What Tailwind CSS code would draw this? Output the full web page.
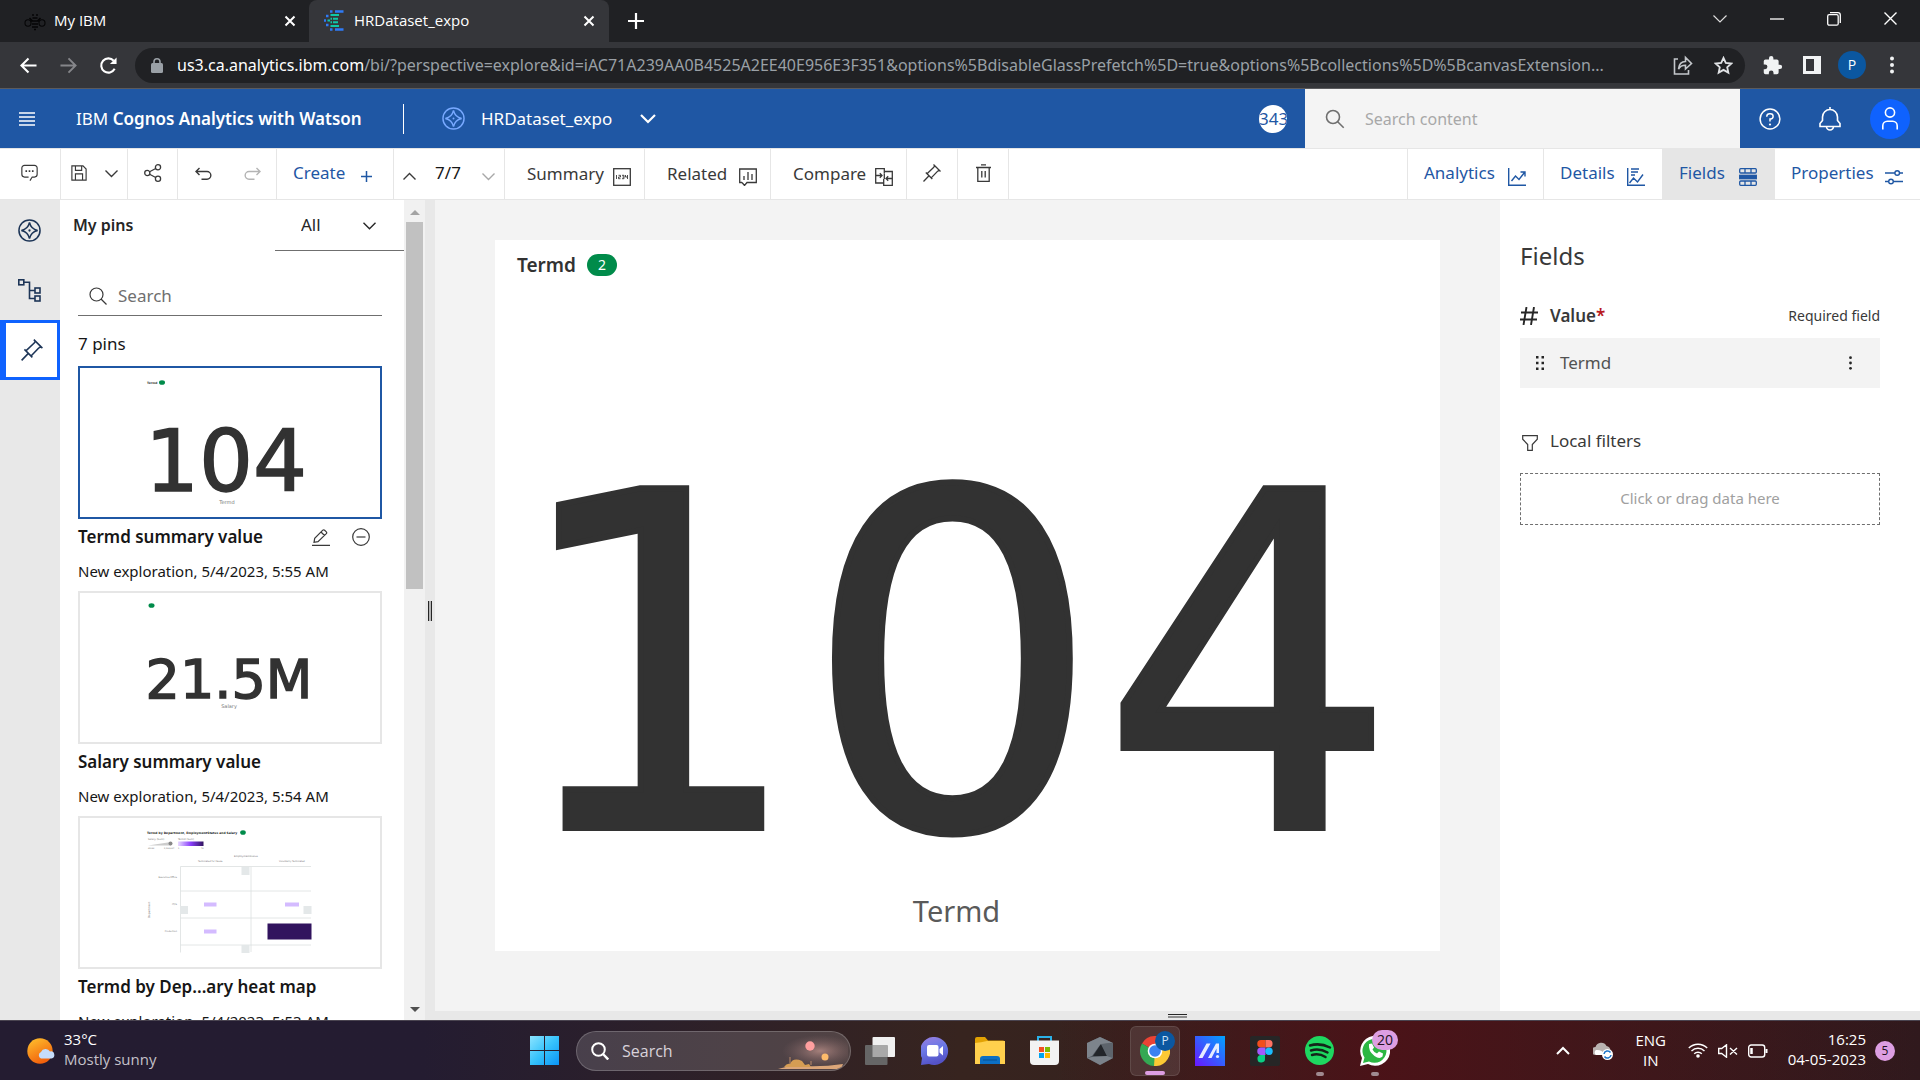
<!DOCTYPE html>
<html lang="en">
<head>
<meta charset="utf-8">
<title>HRDataset_expo</title>
<script src="https://cdn.jsdelivr.net/npm/@tailwindcss/browser@4"></script>
</head>
<body class="flex h-screen flex-col overflow-hidden bg-white font-['Noto_Sans',sans-serif] text-base text-[#161616]">

<!-- Browser window: tab strip -->
<div class="flex h-[42px] shrink-0 items-stretch bg-[#202124] font-['Open_Sans',sans-serif] text-[15px] text-white">
  <div class="flex w-[309px] items-center pr-[9px] pb-px pl-6">
    <svg class="size-[22px] shrink-0" viewBox="0 0 22 22" fill="none" stroke="#050506" stroke-width="1.1"><ellipse cx="4" cy="13" rx="3" ry="3.2"/><ellipse cx="18" cy="13" rx="3" ry="3.2"/><path d="M5.500 8l3 3M16.500 8l-3 3M8 5h2M12 5h2M8.500 8h5M7 11h8M8 14h6M8 17h6M10 19.500h2" stroke-width="1.600"/></svg>
    <span class="ml-2 flex-1">My IBM</span>
    <button class="grid size-5 place-items-center" aria-label="Close tab"><svg class="size-3" viewBox="0 0 12 12" stroke="#fff" stroke-width="2"><path d="M1.500 1.500l9 9M10.500 1.500l-9 9"/></svg></button>
  </div>
  <div class="flex w-[300px] items-center rounded-t-lg bg-[#35363a] pr-[10px] pb-px pl-[15px]">
    <svg class="size-[21px] shrink-0" viewBox="0 0 21 21"><path d="M6 1.500h2.500M11 1.500h8.500M6 19.500h2.500M11 19.500h8.500M0 10.500h2M2 6h2.500M2 15h2.500" stroke="#2f7bf6" stroke-width="2.400"/><path d="M6.500 5h8.500M6.500 8.800h1.500M9 8.800h5M3.500 10.500h2.500M6.500 12.300h1.500M9 12.300h5M6.500 16h8.500" stroke="#0fc7a9" stroke-width="2"/></svg>
    <span class="ml-[9px] flex-1">HRDataset_expo</span>
    <button class="grid size-5 place-items-center" aria-label="Close tab"><svg class="size-3" viewBox="0 0 12 12" stroke="#fff" stroke-width="2"><path d="M1.500 1.500l9 9M10.500 1.500l-9 9"/></svg></button>
  </div>
  <button class="ml-[15px] grid w-6 place-items-center" aria-label="New tab"><svg class="size-4" viewBox="0 0 16 16" stroke="#fff" stroke-width="2.200"><path d="M8 0v16M0 8h16"/></svg></button>
  <div class="mr-px ml-auto flex items-center pb-[5px]">
    <button class="grid w-[57px] place-items-center" aria-label="Search tabs"><svg class="h-2 w-[14px]" viewBox="0 0 14 8" fill="none" stroke="#ddd" stroke-width="1.200"><path d="M.5 .5L7 7l6.500-6.500"/></svg></button>
    <button class="grid w-[57px] place-items-center" aria-label="Minimize"><svg class="h-3 w-[14px]" viewBox="0 0 14 12" stroke="#fff" stroke-width="1.300"><path d="M0 6h14"/></svg></button>
    <button class="grid w-[57px] place-items-center" aria-label="Restore"><svg class="size-[14px]" viewBox="0 0 14 14" fill="none" stroke="#fff" stroke-width="1.300"><rect x=".7" y="2.700" width="10.500" height="10.500" rx="1.500"/><path d="M3 .7h8a2.300 2.300 0 0 1 2.300 2.300v8"/></svg></button>
    <button class="grid w-[57px] place-items-center" aria-label="Close"><svg class="size-[13px]" viewBox="0 0 13 13" stroke="#fff" stroke-width="1.400"><path d="M.5 .5l12 12M12.500 .5l-12 12"/></svg></button>
  </div>
</div>

<!-- Browser window: address bar -->
<div class="flex h-[47px] shrink-0 items-center border-b border-[#5b5b5e] bg-[#35363a] pr-2 pl-[8px] font-['Open_Sans',sans-serif] text-[#e8eaed]">
  <button class="grid w-10 place-items-center" aria-label="Back"><svg class="size-[17px]" viewBox="0 0 18 18" fill="none" stroke="#fff" stroke-width="2.200"><path d="M17.500 9H2M9 1.500L1.500 9 9 16.500"/></svg></button>
  <button class="grid w-10 place-items-center" aria-label="Forward"><svg class="size-[17px]" viewBox="0 0 18 18" fill="none" stroke="#85868a" stroke-width="2"><path d="M.5 9H16M9 1.500L16.500 9 9 16.500"/></svg></button>
  <button class="grid w-10 place-items-center" aria-label="Reload"><svg class="size-[19px]" viewBox="0 0 20 20" fill="none" stroke="#fff" stroke-width="2.200"><path d="M16.500 13.500A7.500 7.500 0 1 1 15.500 5"/><path d="M18.500 1.500v7h-7z" fill="#fff" stroke="none"/></svg></button>
  <div class="ml-[7px] flex h-[35px] min-w-0 flex-1 items-center rounded-full bg-[#202124] pr-[2px] pl-4">
    <svg class="h-[15px] w-3 shrink-0" viewBox="0 0 12 15"><rect y="5" width="12" height="10" rx="1.500" fill="#9aa0a6"/><path d="M3 6V3.800a3 3 0 0 1 6 0V6" fill="none" stroke="#9aa0a6" stroke-width="1.600"/></svg>
    <div role="textbox" aria-label="Address" class="ml-[14px] min-w-0 flex-1 overflow-hidden font-['Noto_Sans',sans-serif] text-base whitespace-nowrap text-[#9aa0a6]"><span class="text-white">us3.ca.analytics.ibm.com</span>/bi/?perspective=explore&amp;id=iAC71A239AA0B4525A2EE40E956E3F351&amp;options%5BdisableGlassPrefetch%5D=true&amp;options%5Bcollections%5D%5BcanvasExtension...</div>
    <button class="ml-1 grid w-10 place-items-center" aria-label="Share page"><svg class="size-5" viewBox="0 0 20 20" fill="none" stroke="#c4c7cb" stroke-width="1.600"><path d="M5 4H1.500v15h14v-4"/><path d="M5.500 14c.5-5 3-7.500 7-7.500V2.500l6 6-6 5.500v-3.800c-3 0-5.500 1-7 3.800z"/></svg></button>
    <button class="grid w-10 place-items-center" aria-label="Bookmark"><svg class="size-[19px]" viewBox="0 0 20 20" fill="none" stroke="#e0e2e5" stroke-width="1.900"><path d="M10 2l2.400 5.300 5.800.6-4.300 3.900 1.200 5.700-5.100-2.900-5.100 2.900 1.200-5.700L1.800 7.900l5.800-.6z"/></svg></button>
  </div>
  <button class="ml-[7px] grid w-10 place-items-center" aria-label="Extensions"><svg class="size-[21px]" viewBox="0 0 24 24" fill="#f1f3f4"><path d="M20.500 11H19V7a2 2 0 0 0-2-2h-4V3.500a2.500 2.500 0 0 0-5 0V5H4a2 2 0 0 0-2 2v3.800h1.500a2.700 2.700 0 0 1 0 5.400H2V20a2 2 0 0 0 2 2h3.800v-1.500a2.700 2.700 0 0 1 5.400 0V22H17a2 2 0 0 0 2-2v-4h1.500a2.500 2.500 0 0 0 0-5z"/></svg></button>
  <button class="grid w-10 place-items-center" aria-label="Side panel"><svg class="size-[18px]" viewBox="0 0 18 18"><path fill="#f1f3f4" fill-rule="evenodd" d="M0 0h18v18H0zM3 3v12h8V3z"/></svg></button>
  <button class="mx-[6px] grid size-7 place-items-center rounded-full bg-[#0b57a0] text-sm text-white" aria-label="Profile">P</button>
  <button class="grid w-10 place-items-center" aria-label="Menu"><svg class="h-[18px] w-1" viewBox="0 0 4 18" fill="#f1f3f4"><circle cx="2" cy="2.500" r="2"/><circle cx="2" cy="9" r="2"/><circle cx="2" cy="15.500" r="2"/></svg></button>
</div>

<!-- Application header -->
<header class="flex h-[59px] shrink-0 items-center bg-[#1f57a4] text-white">
  <button class="grid w-[54px] place-items-center" aria-label="Open menu"><svg class="h-[14px] w-4" viewBox="0 0 16 14" stroke="#fff" stroke-width="1.400"><path d="M0 1h16M0 5h16M0 9h16M0 13h16"/></svg></button>
  <div class="ml-[22px] w-[327px] text-[17px] whitespace-nowrap">IBM <b class="font-semibold">Cognos Analytics with Watson</b></div>
  <div class="h-[30px] w-px bg-white"></div>
  <svg class="ml-[38px] size-[23px]" viewBox="0 0 24 24" fill="none" stroke="#78a9ff" stroke-width="1.500"><circle cx="12" cy="12" r="11"/><path d="M12 3.500Q13.500 10.500 20.500 12 13.500 13.500 12 20.500 10.500 13.500 3.500 12 10.500 10.500 12 3.500z"/><circle cx="12" cy="12" r="1" fill="#78a9ff" stroke="none"/></svg>
  <button class="ml-4 flex items-center gap-[28px] text-[17px]">HRDataset_expo <svg class="h-[10px] w-4" viewBox="0 0 16 10" fill="none" stroke="#fff" stroke-width="2.200"><path d="M1 1l7 7 7-7"/></svg></button>
  <div class="mr-[18px] ml-auto flex size-7 items-center justify-start overflow-hidden rounded-full bg-white text-[17px] text-[#1f57a4]"><span>343</span></div>
  <label class="flex h-full w-[435px] items-center bg-[#f4f4f4] pl-5">
    <svg class="size-5" viewBox="0 0 20 20" fill="none" stroke="#6f6f6f" stroke-width="1.600"><circle cx="8" cy="8" r="6.500"/><path d="M12.700 12.700l6 6"/></svg>
    <input type="text" aria-label="Search content" placeholder="Search content" class="ml-5 w-[340px] bg-transparent text-base text-[#393939] outline-none placeholder:text-[#a8a8a8]">
  </label>
  <button class="grid w-[60px] place-items-center" aria-label="Help"><svg class="size-[22px]" viewBox="0 0 24 24" fill="none" stroke="#fff" stroke-width="1.600"><circle cx="12" cy="12" r="10.800"/><path d="M8.500 9.500V9A3 3 0 0 1 11.500 6.200h1a2.900 2.900 0 0 1 0 5.800H12v2.800"/><circle cx="12" cy="18" r="1.200" fill="#fff" stroke="none"/></svg></button>
  <button class="grid w-[60px] place-items-center" aria-label="Notifications"><svg class="h-6 w-[22px]" viewBox="0 0 22 24" fill="none" stroke="#fff" stroke-width="1.600"><path d="M11 0v3M1 19.500v-3l2.500-3V10a7.500 7.500 0 0 1 15 0v3.500l2.500 3v3zM7.500 19.500a3.500 3.500 0 0 0 7 0"/></svg></button>
  <button class="mx-[10px] grid size-10 place-items-center rounded-full bg-[#0f62fe]" aria-label="Account"><svg class="h-[23px] w-4" viewBox="0 0 16 23" fill="none" stroke="#fff" stroke-width="1.600"><circle cx="8" cy="5.500" r="4.600"/><path d="M.8 22.500v-3.700a4.500 4.500 0 0 1 4.500-4.500h5.400a4.500 4.500 0 0 1 4.500 4.500v3.700"/></svg></button>
</header>

<!-- Exploration toolbar -->
<div class="flex h-[52px] shrink-0 items-stretch border-y border-[#e6e6e6] text-[17px] text-[#393939]">
  <button class="grid w-[61px] place-items-center border-r border-[#e6e6e6] pr-px pb-[2px]" aria-label="Comments"><svg class="h-[18px] w-[19px]" viewBox="0 0 19 20" fill="none" stroke="#393939" stroke-width="1.300"><path d="M10 18.500l2.500-4H15a3 3 0 0 0 3-3V4.500a3 3 0 0 0-3-3H4a3 3 0 0 0-3 3v7a3 3 0 0 0 3 3h4.500"/><path d="M5 8h1.800M8.600 8h1.800M12.200 8H14" stroke-width="2"/></svg></button>
  <div class="flex w-[67px] items-center border-r border-[#e6e6e6] pb-[2px] pl-[10px]">
    <button aria-label="Save"><svg class="size-4" viewBox="0 0 18 18" fill="none" stroke="#393939" stroke-width="1.300"><path d="M1 1h12.500L17 4.500V17H1zM5 1v5h7V1M5 17v-7h8v7"/></svg></button>
    <button class="ml-[18px]" aria-label="Save options"><svg class="h-[9px] w-[13px]" viewBox="0 0 13 9" fill="none" stroke="#393939" stroke-width="1.400"><path d="M.5 1.500l6 6 6-6"/></svg></button>
  </div>
  <button class="grid w-[50px] place-items-center border-r border-[#e6e6e6] pb-[2px]" aria-label="Share"><svg class="size-[18px]" viewBox="0 0 18 18" fill="none" stroke="#393939" stroke-width="1.300"><circle cx="3.300" cy="9" r="2.600"/><circle cx="14" cy="3.300" r="2.600"/><circle cx="14" cy="14.700" r="2.600"/><path d="M5.600 7.800l6.100-3.300M5.600 10.200l6.100 3.300"/></svg></button>
  <div class="flex w-[99px] items-center gap-8 border-r border-[#e6e6e6] pl-[17px]">
    <button aria-label="Undo"><svg class="h-[14px] w-[17px]" viewBox="0 0 17 14" fill="none" stroke="#393939" stroke-width="1.400"><path d="M4.500 1L1 4.500 4.500 8M1 4.500h11a3.800 3.800 0 0 1 0 7.700H6.500"/></svg></button>
    <button aria-label="Redo"><svg class="h-[14px] w-[17px]" viewBox="0 0 17 14" fill="none" stroke="#b4b4b4" stroke-width="1.400"><path d="M12.500 1L16 4.500 12.500 8M16 4.500H5a3.800 3.800 0 0 0 0 7.700h5.500"/></svg></button>
  </div>
  <button class="flex w-[117px] items-center gap-4 border-r border-[#e6e6e6] pl-4 text-[#1f57a4]"><span class="pb-[2px]">Create</span><svg class="mt-[5px] size-[11px]" viewBox="0 0 11 11" stroke="#1f57a4" stroke-width="1.500"><path d="M5.500 0v11M0 5.500h11"/></svg></button>
  <div class="flex w-[111px] items-center border-r border-[#e6e6e6] pl-[9px] text-[#161616]">
    <button class="mt-1" aria-label="Previous"><svg class="h-[9px] w-[13px]" viewBox="0 0 13 9" fill="none" stroke="#393939" stroke-width="1.400"><path d="M.5 7.500l6-6 6 6"/></svg></button>
    <span class="w-[66px] pr-[2px] pb-[2px] text-center">7/7</span>
    <button class="mt-1" aria-label="Next"><svg class="h-[9px] w-[13px]" viewBox="0 0 13 9" fill="none" stroke="#a8a8a8" stroke-width="1.400"><path d="M.5 1.500l6 6 6-6"/></svg></button>
  </div>
  <button class="flex w-[140px] items-center justify-between border-r border-[#e6e6e6] pr-[13px] pl-[22px]"><span class="pb-px">Summary</span><svg class="mt-[5px] h-[18px] w-[18px]" viewBox="0 0 18 18" fill="none" stroke="#393939" stroke-width="1.300"><rect x=".7" y=".7" width="16.600" height="16.600"/><path d="M3.500 7v4M5.500 7.300h2v1.700h-2v1.700h2M9 7.300h2v3.400H9M9.500 9h1.500M12.500 7v2h2M14.500 7v4" stroke-width=".9"/></svg></button>
  <button class="flex w-[126px] items-center justify-between border-r border-[#e6e6e6] pr-[13px] pl-[22px]"><span class="pb-px">Related</span><svg class="mt-[5px] h-[18px] w-[18px]" viewBox="0 0 18 18" fill="none" stroke="#393939" stroke-width="1.300"><path d="M3 14.500H.7V1h16.600v13.500H8l-2.500 3-2.500-3M5 8v4M9 4v8M13 6v6"/></svg></button>
  <button class="flex w-[136px] items-center justify-between border-r border-[#e6e6e6] pr-[13px] pl-[22px]"><span class="pb-px">Compare</span><svg class="mt-[5px] h-[18px] w-[18px]" viewBox="0 0 18 18" fill="none" stroke="#393939" stroke-width="1.300"><path d="M8.500 15H.7V.7h8.600v4.500M9.300 11V5.500M9 3.500h8.300v13.800H8.700V11"/><path d="M1 7.500h6M4.800 5.300L7 7.500 4.800 9.700M17 10.500h-6M13.200 8.300L11 10.500l2.200 2.200"/></svg></button>
  <button class="grid w-[51px] place-items-center border-r border-[#e6e6e6] pb-[2px]" aria-label="Pin"><svg class="size-[18px]" viewBox="0 0 18 18" fill="none" stroke="#393939" stroke-width="1.300"><path d="M.5 17.500l5.500-5.700M2.800 8.500l6.500 6.500M4 9.700L10.800 3.300M8.200 13.900L14.700 7.100M10.500.5l7 7M10.800 3.300L11.700 1.700M14.700 7.100L16.400 6.300"/></svg></button>
  <button class="grid w-[51px] place-items-center border-r border-[#e6e6e6] pb-[2px]" aria-label="Delete"><svg class="h-[18px] w-[15px]" viewBox="0 0 15 18" fill="none" stroke="#393939" stroke-width="1.300"><path d="M5 .8h5M0 3.500h15M1.800 3.500v13.800h11.400V3.500M5.800 7v6.500M9.200 7v6.500"/></svg></button>
  <div class="ml-auto flex text-[#1f57a4]">
    <button class="flex w-[136px] items-center justify-between border-l border-[#e6e6e6] pr-[17px] pl-4"><span class="pb-[2px]">Analytics</span><svg class="mt-[5px] size-[18px]" viewBox="0 0 18 18" fill="none" stroke="#1f57a4" stroke-width="1.400"><path d="M.7 0v17.300H18M3.500 13l4-5 3.500 3.500 5.500-7M12.500 4h4.500v4.500"/></svg></button>
    <button class="flex w-[119px] items-center justify-between border-l border-[#e6e6e6] pr-[17px] pl-4"><span class="pb-[2px]">Details</span><svg class="mt-[5px] size-[18px]" viewBox="0 0 18 18" fill="none" stroke="#1f57a4" stroke-width="1.400"><path d="M.7 0v17.300H18M4 1h8M4 4h7M4 7h4M2.500 15l4-5 4 4 5.500-7.500"/></svg></button>
    <button class="flex w-[113px] items-center justify-between bg-[#e6e6e6] pr-[18px] pl-[17px]"><span class="pb-[2px]">Fields</span><svg class="mt-[5px] size-[18px]" viewBox="0 0 18 18" fill="none" stroke="#1f57a4" stroke-width="1.300"><rect x=".7" y=".7" width="16.600" height="4.300" rx="1"/><rect x=".7" y="7.300" width="16.600" height="3.400" fill="#1f57a4"/><rect x=".7" y="13" width="16.600" height="4.300" rx="1"/><path d="M6 1v4M12 1v4M6 13v4M12 13v4"/></svg></button>
    <button class="flex w-[145px] items-center justify-between pr-[17px] pl-4"><span class="pb-[2px]">Properties</span><svg class="mt-[5px] size-[18px]" viewBox="0 0 18 18" fill="none" stroke="#1f57a4" stroke-width="1.400"><path d="M0 5h10M14.500 5H18M0 13.500h3.500M8.500 13.500H18"/><circle cx="12.200" cy="5" r="2.300"/><circle cx="6" cy="13.500" r="2.300"/></svg></button>
  </div>
</div>

<main class="flex min-h-0 flex-1">
  <!-- Navigation rail -->
  <nav class="flex w-[60px] shrink-0 flex-col bg-[#e8e8e8]">
    <button class="grid h-[60px] place-items-center pr-[2px]" aria-label="Explore"><svg class="size-[23px]" viewBox="0 0 24 24" fill="none" stroke="#1d3557" stroke-width="1.600"><circle cx="12" cy="12" r="11"/><path d="M12 3.500Q13.500 10.500 20.500 12 13.500 13.500 12 20.500 10.500 13.500 3.500 12 10.500 10.500 12 3.500z"/><circle cx="12" cy="12" r="1.200" fill="#1d3557" stroke="none"/></svg></button>
    <button class="grid h-[60px] place-items-center pr-[2px]" aria-label="Relationships"><svg class="size-[23px]" viewBox="0 0 23 23" fill="none" stroke="#1d3557" stroke-width="1.600"><rect x=".8" y=".8" width="5" height="5"/><rect x="17" y="9" width="5" height="5"/><rect x="17" y="17" width="5" height="5"/><path d="M6 3.300h5.500v16.200H17M11.500 11.500H17"/></svg></button>
    <button class="grid h-[60px] place-items-center border-3 border-l-6 border-[#0f62fe] bg-white" aria-label="Pins"><svg class="size-[22px]" viewBox="0 0 18 18" fill="none" stroke="#1d3557" stroke-width="1.300"><path d="M.5 17.500l5.500-5.700M2.800 8.500l6.500 6.500M4 9.700L10.800 3.300M8.200 13.900L14.700 7.100M10.500.5l7 7M10.800 3.300L11.700 1.700M14.700 7.100L16.400 6.300"/></svg></button>
  </nav>

  <!-- Pins pane -->
  <section class="flex w-[344px] shrink-0 flex-col overflow-hidden" aria-label="My pins">
    <div class="flex h-[51px] shrink-0 justify-between pl-[13px]">
      <h2 class="pt-[13px] text-base font-semibold text-[#262626]">My pins</h2>
      <div class="relative w-[129px] border-b border-[#6f6f6f]">
        <select aria-label="Pin filter" class="h-full w-full appearance-none bg-transparent pl-[26px] text-[17px] text-[#262626]"><option>All</option></select>
        <svg class="absolute top-[22px] right-7 h-[8px] w-[13px]" viewBox="0 0 13 8" fill="none" stroke="#262626" stroke-width="1.400"><path d="M.5 .8l6 6 6-6"/></svg>
      </div>
    </div>
    <div class="pr-[22px] pl-[18px]">
      <label class="mt-[27px] flex h-[38px] items-center border-b border-[#6f6f6f] pb-[2px] pl-[11px]">
        <svg class="size-[18px]" viewBox="0 0 18 18" fill="none" stroke="#393939" stroke-width="1.200"><circle cx="7.500" cy="7.500" r="6.500"/><path d="M12 12l5.500 5.500"/></svg>
        <input type="text" aria-label="Search pins" placeholder="Search" class="ml-[11px] w-[240px] bg-transparent text-[17px] outline-none placeholder:text-[#6f6f6f]">
      </label>
      <p class="mt-[16px] mb-[10px] h-6 text-[17px] leading-6">7 pins</p>
      <article class="h-[225px]">
        <button class="block h-[153px] w-full border-2 border-[#1f57a4]" aria-label="Termd summary value"><svg class="h-full w-full font-['DejaVu_Sans',sans-serif]" viewBox="0 0 300 149" fill="#323232"><text x="67" y="16" font-size="3" font-weight="bold">Termd</text><ellipse cx="82" cy="14.500" rx="3" ry="2.300" fill="#008b4a"/><text x="146" y="123" font-size="85" text-anchor="middle" stroke="#323232" stroke-width="1.500">104</text><text x="147" y="136" font-size="5" text-anchor="middle" fill="#777">Termd</text></svg></button>
        <div class="mt-[6px] flex h-6 items-center">
          <h3 class="flex-1 text-[17px] leading-6 font-semibold">Termd summary value</h3>
          <button aria-label="Edit"><svg class="h-[17px] w-[18px]" viewBox="0 0 18 17" fill="none" stroke="#393939" stroke-width="1.200"><path d="M0 16.300h18M2 13.300l.7-4L10.800 1.200a1.300 1.300 0 0 1 1.800 0l1.700 1.700a1.300 1.300 0 0 1 0 1.800L6 12.700zM9 3l3.500 3.500"/></svg></button>
          <button class="mr-3 ml-[22px]" aria-label="Remove"><svg class="size-[18px]" viewBox="0 0 18 18" fill="none" stroke="#393939" stroke-width="1.200"><circle cx="9" cy="9" r="8.300"/><path d="M4.500 9h9"/></svg></button>
        </div>
        <p class="mt-3 text-[15px] leading-5">New exploration, 5/4/2023, 5:55 AM</p>
      </article>
      <article class="h-[225px]">
        <button class="block h-[153px] w-full border-2 border-[#e6e6e6]" aria-label="Salary summary value"><svg class="h-full w-full font-['DejaVu_Sans',sans-serif]" viewBox="0 0 300 149" fill="#323232"><ellipse cx="71.500" cy="12.500" rx="3" ry="2.300" fill="#008b4a"/><text x="149" y="105" font-size="54" text-anchor="middle" stroke="#323232" stroke-width="1.500">21.5M</text><text x="149" y="115" font-size="5" text-anchor="middle" fill="#777">Salary</text></svg></button>
        <h3 class="mt-[6px] text-[17px] leading-6 font-semibold">Salary summary value</h3>
        <p class="mt-3 text-[15px] leading-5">New exploration, 5/4/2023, 5:54 AM</p>
      </article>
      <article class="h-[225px]">
        <button class="block h-[153px] w-full border-2 border-[#e6e6e6]" aria-label="Termd by Department heat map"><svg class="h-full w-full font-['DejaVu_Sans',sans-serif]" viewBox="0 0 300 149" fill="#777">
          <defs><linearGradient id="scale"><stop stop-color="#e8daff"/><stop offset=".5" stop-color="#8a3ffc"/><stop offset="1" stop-color="#31135e"/></linearGradient></defs>
          <text x="67" y="16" font-size="3" font-weight="bold" fill="#222">Termd by Department, EmploymentStatus and Salary</text><ellipse cx="163" cy="14.500" rx="2.800" ry="2.300" fill="#008b4a"/>
          <text x="68" y="22" font-size="2.500">Salary (Sum)</text><text x="98" y="22" font-size="2.500">Termd (Sum)</text>
          <path d="M68 27.500l23-3.500v3.500z" fill="#ccc"/><circle cx="90.500" cy="25.500" r="2" fill="#888"/>
          <rect x="98" y="23.500" width="25.500" height="4.500" fill="url(#scale)"/>
          <text x="68" y="31" font-size="2">45046</text><text x="84" y="31" font-size="2">5,564,967</text><text x="98" y="31" font-size="2">1</text><text x="121" y="31" font-size="2">79</text>
          <text x="154" y="38.500" font-size="2.500">EmploymentStatus</text><text x="118" y="44" font-size="2.300">Terminated for Cause</text><text x="199" y="44" font-size="2.300">Voluntarily Terminated</text>
          <path d="M100.500 134.500V48.500H231M100.500 73H231M100.500 100H231M100.500 127H231M171 49v85" fill="none" stroke="#dcdfe0" stroke-width=".8"/>
          <text x="97" y="60" font-size="2.300" text-anchor="end">Executive Office</text><text x="97" y="87" font-size="2.300" text-anchor="end">IT/IS</text><text x="97" y="114" font-size="2.300" text-anchor="end">Production</text><text transform="translate(70 100) rotate(-90)" font-size="2.700">Department</text>
          <path d="M161.500 49h8v8h-8zM161.500 127h8v8h-8zM100 88h8v8h-8zM223.500 88h8v8h-8z" fill="#e4e8e9"/>
          <path d="M124 84.500h12.500v4H124zM205 84.500h14v4h-14zM124 111.500h12.500v4H124z" fill="#d4bbff"/>
          <rect x="187.500" y="105.500" width="44" height="16" fill="#31135e"/></svg></button>
        <h3 class="mt-[6px] text-[17px] leading-6 font-semibold">Termd by Dep...ary heat map</h3>
        <p class="mt-3 text-[15px] leading-5">New exploration, 5/4/2023, 5:53 AM</p>
      </article>
    </div>
  </section>

  <!-- Pane scrollbar and splitter -->
  <div class="flex w-[21px] shrink-0 flex-col items-center bg-[#f1f1f1] py-2">
    <svg class="mt-[2px] h-[5px] w-[10px]" viewBox="0 0 10 5"><path d="M0 5l5-5 5 5z" fill="#a3a3a3"/></svg>
    <div class="mt-[7px] h-[367px] w-[17px] bg-[#c1c1c1]"></div>
    <svg class="mt-auto h-[5px] w-[10px]" viewBox="0 0 10 5"><path d="M0 0l5 5 5-5z" fill="#505050"/></svg>
  </div>
  <div class="flex w-[10px] shrink-0 justify-center bg-[#e8e8e8] pt-[401px]"><div class="h-5 w-[4px] border-x border-[#262626] bg-[#b5b5b5]"></div></div>

  <div class="flex min-w-0 flex-1 flex-col">
    <div class="flex min-h-0 flex-1">
      <!-- Canvas -->
      <section class="flex min-w-0 flex-1 bg-[#f3f3f3] px-[60px] pt-10 pb-[60px]">
        <div class="flex min-w-0 flex-1 flex-col overflow-hidden bg-white">
          <div class="flex items-center gap-[11px] pt-[11px] pl-[22px]"><h1 class="text-[19px] leading-7 font-semibold text-[#323232]">Termd</h1><span class="flex h-[22px] w-[30px] items-center justify-center rounded-full bg-[#008b4a] text-sm text-white">2</span></div>
          <div class="mt-auto flex flex-col items-center pr-[22px] pb-4">
            <div class="mb-6 pr-2 font-['DejaVu_Sans',sans-serif] text-[466px] leading-[400px] text-[#323232] [-webkit-text-stroke:6px_#323232]">104</div>
            <div class="pb-1 text-[29px] leading-10 text-[#5a5a5a]">Termd</div>
          </div>
        </div>
      </section>
      <!-- Fields panel -->
      <aside class="w-[420px] shrink-0 bg-white pt-10 pr-10 pl-5 text-[#393939]">
        <h2 class="text-2xl leading-8">Fields</h2>
        <div class="mt-7 flex h-[31px] items-center">
          <svg class="size-[18px]" viewBox="0 0 18 18" fill="none" stroke="#262626" stroke-width="1.900"><path d="M6.500 0L3.500 18M14 0l-3 18M1 5.500h17M0 12.500h17"/></svg>
          <span class="ml-3 flex-1 text-[17px] font-semibold">Value<span class="text-[#b81921]">*</span></span>
          <span class="text-sm">Required field</span>
        </div>
        <div class="mt-[7px] flex h-[50px] items-center bg-[#f3f3f3] pr-[26px] pl-4">
          <svg class="h-[14px] w-2" viewBox="0 0 8 14" fill="#262626"><path d="M0 0h2.500v2.500H0zM5.500 0H8v2.500H5.500zM0 5.700h2.500v2.500H0zM5.500 5.700H8v2.500H5.500zM0 11.500h2.500V14H0zM5.500 11.500H8V14H5.500z"/></svg>
          <span class="ml-4 flex-1 text-[17px] text-[#525252]">Termd</span>
          <button class="grid w-2 place-items-center" aria-label="Field options"><svg class="h-[14px] w-[3px]" viewBox="0 0 3 14" fill="#262626"><circle cx="1.500" cy="1.700" r="1.400"/><circle cx="1.500" cy="7" r="1.400"/><circle cx="1.500" cy="12.300" r="1.400"/></svg></button>
        </div>
        <div class="mt-[41px] flex items-center text-[17px] leading-6">
          <svg class="mx-[2px] mt-1 size-4" viewBox="0 0 16 16" fill="none" stroke="#393939" stroke-width="1.200"><path d="M.7 .7h14.600v3.500l-5 5.300v5.800H5.700V9.500L.7 4.200z"/></svg>
          <span class="ml-[10px]">Local filters</span>
        </div>
        <button class="mt-5 block h-[52px] w-full border border-dashed border-[#6f6f6f] pb-[2px] text-[15px] text-[#a0a0a0]">Click or drag data here</button>
      </aside>
    </div>
    <div class="flex h-[9px] shrink-0 items-center bg-[#e8e8e8] pl-[733px]"><div class="h-[4px] w-[19px] border-t border-[#262626] border-b-2 border-b-[#8d8d8d]"></div></div>
  </div>
</main>

<!-- Desktop taskbar -->
<footer class="flex h-[60px] shrink-0 items-center border-t border-[#4a4450] bg-linear-to-r from-[#241c31] from-22% via-[#37241f] via-50% to-[#30191d] font-['Open_Sans',sans-serif] text-[15px] text-white">
  <div class="flex h-full w-full items-center bg-linear-to-r from-transparent from-55% via-[#4d1117]/90 via-72% to-transparent">
  <div class="flex w-[520px] items-center pl-[27px]">
    <svg class="h-[26px] w-7" viewBox="0 0 28 26"><defs><linearGradient id="sun" x1="0" y1="0" x2=".5" y2="1"><stop stop-color="#ffc42e"/><stop offset="1" stop-color="#f2610c"/></linearGradient></defs><circle cx="13" cy="13" r="12.700" fill="url(#sun)"/><path d="M14 20.500a3.500 3.500 0 0 1 0-6.500 5 5 0 0 1 9-.5 3.500 3.500 0 0 1 1.500 7z" fill="#c5dcfb"/></svg>
    <div class="ml-[9px] pb-[3px] text-[15px] leading-5">33°C<br><span class="text-[#c5c1c9]">Mostly sunny</span></div>
  </div>
  <button class="ml-[10px] shrink-0" aria-label="Start"><svg class="size-[29px]" viewBox="0 0 29 29"><defs><linearGradient id="win" x1="0" y1="0" x2="1" y2="1"><stop stop-color="#8ce4ff"/><stop offset=".5" stop-color="#37c3fb"/><stop offset="1" stop-color="#0a94f7"/></linearGradient></defs><path d="M0 0h14v14H0zM15 0h14v14H15zM0 15h14v14H0zM15 15h14v14H15z" fill="url(#win)"/></svg></button>
  <label class="ml-[17px] flex h-10 w-[275px] shrink-0 items-center overflow-hidden rounded-full border border-white/20 bg-white/15 pl-[14px]">
    <svg class="size-[18px] shrink-0" viewBox="0 0 18 18" fill="none" stroke="#fff" stroke-width="2"><circle cx="7.500" cy="7.500" r="6.300"/><path d="M12 12l5.200 5.500" stroke-width="2.400"/></svg>
    <input type="text" aria-label="Search desktop" placeholder="Search" class="ml-[13px] w-[156px] bg-transparent text-base outline-none placeholder:text-[#d8d2da]">
    <svg class="h-9 w-[70px] shrink-0" viewBox="0 0 70 36"><defs><radialGradient id="sky"><stop stop-color="#c99a92" stop-opacity=".7"/><stop offset="1" stop-color="#8a6a6c" stop-opacity="0"/></radialGradient></defs><ellipse cx="42" cy="18" rx="38" ry="16" fill="url(#sky)"/><circle cx="32" cy="13" r="4.700" fill="#ff9f9f"/><circle cx="47" cy="24" r="3.500" fill="#fdbb6b"/><path d="M0 36q12-4 25-3 20 1 40-2l-2 5z" fill="#dba679"/><path d="M6 34q3-4 6-3 3-7 12-3l3 4 4-1 2 3z" fill="#d59d53"/><path d="M12 31v-7M33 32v-4" stroke="#b98a6a"/></svg>
  </label>
  <div class="ml-px flex h-full shrink-0 items-center">
    <button class="grid w-[55px] place-items-center" aria-label="Task view"><svg class="h-7 w-[30px]" viewBox="0 0 30 28"><rect x="7.500" width="22.500" height="20" rx="1" fill="#f0f0f0"/><rect y="8" width="22.500" height="20" rx="1" fill="#666"/><rect x="7.500" y="8" width="15" height="12" fill="#a9a9a9"/></svg></button>
    <button class="grid w-[55px] place-items-center" aria-label="Chat"><svg class="size-7" viewBox="0 0 28 28"><defs><linearGradient id="chat" x1="0" y1="0" x2=".3" y2="1"><stop stop-color="#9b7fe0"/><stop offset=".5" stop-color="#6a78e6"/><stop offset="1" stop-color="#5452c6"/></linearGradient></defs><path d="M14 0a14 14 0 1 1-6 27L0 28l1-7A14 14 0 0 1 14 0z" fill="url(#chat)"/><rect x="6" y="8" width="11.500" height="11.500" rx="2" fill="#fff"/><path d="M18.500 12l3.500-3v9.500l-3.500-3z" fill="#fff"/></svg></button>
    <button class="grid w-[55px] place-items-center" aria-label="Files"><svg class="h-[27px] w-[30px]" viewBox="0 0 30 27"><path d="M0 2a2 2 0 0 1 2-2h8l3 3.500h15a2 2 0 0 1 2 2V9H0z" fill="#e2a203"/><path d="M0 6q6-.5 12-2h18v23H0z" fill="#ffd04d"/><path d="M5 27v-5a3 3 0 0 1 3-3h14a3 3 0 0 1 3 3v5z" fill="#0c6fc4"/><path d="M8 23h14" stroke="#07518f"/></svg></button>
    <button class="grid w-[55px] place-items-center" aria-label="Store"><svg class="size-[29px]" viewBox="0 0 29 29"><path d="M8 6V1h13v5" fill="none" stroke="#2bb1e8" stroke-width="2"/><path d="M0 4.500h29V25a4 4 0 0 1-4 4H4a4 4 0 0 1-4-4z" fill="#f3f3f3"/><path d="M9 11h5v5H9z" fill="#f25022"/><path d="M15 11h5v5h-5z" fill="#7fba00"/><path d="M9 17h5v5H9z" fill="#00a4ef"/><path d="M15 17h5v5h-5z" fill="#ffb900"/></svg></button>
    <button class="grid w-[55px] place-items-center" aria-label="Armoury"><svg class="h-7 w-[26px]" viewBox="0 0 26 28"><path d="M13 0l13 6v15l-13 7-13-7V6z" fill="#4e545c"/><path d="M13 0l13 6-10 1-3 1-8 11-5 2V6z" fill="#7d848c"/><path d="M14 7l6 12-14 0z" fill="#22252a"/><path d="M14 7l12-1v15l-6-2z" fill="#5d646c"/><path d="M5 20l15-1 6 2-13 7-13-7z" fill="#7b828a"/></svg></button>
    <button class="relative mx-[3px] grid size-[50px] place-items-center rounded-md border border-white/10 bg-white/10" aria-label="Browser"><svg class="size-[30px]" viewBox="0 0 30 30"><path d="M15 15L2 7.500a15 15 0 0 1 26 0z" fill="#ea4335"/><path d="M15 15L2 7.500A15 15 0 0 0 14 30l7.500-11z" fill="#34a853"/><path d="M15 15l-1 15A15 15 0 0 0 28 7.500H15z" fill="#fbc934"/><circle cx="15" cy="15" r="7.300" fill="#fff"/><circle cx="15" cy="15" r="5.800" fill="#3b82f0"/></svg><span class="absolute top-1 right-1 grid size-5 place-items-center rounded-full bg-[#0b57a0] text-xs text-[#cfe2f5]">P</span><span class="absolute bottom-0 h-1 w-5 rounded-full bg-[#dd9ee2]"></span></button>
    <button class="grid w-[54px] place-items-center" aria-label="MyASUS"><svg class="size-[30px]" viewBox="0 0 30 30"><defs><linearGradient id="asus" x1="0" y1="1" x2="1" y2="0"><stop stop-color="#6a16ff"/><stop offset="1" stop-color="#00a4ff"/></linearGradient></defs><path d="M0 0h30v30H0z" fill="url(#asus)"/><path d="M3.500 22L11.500 7.500h4L7.500 22zM13 22l8-14.500h3V17h-2.500v-4.500L16.500 22z" fill="#e6ecff"/><circle cx="22.500" cy="20.500" r="1.600" fill="#e6ecff"/></svg></button>
    <button class="grid w-[55px] place-items-center" aria-label="Figma"><svg class="size-[30px]" viewBox="0 0 30 30"><rect width="30" height="30" rx="2" fill="#262626"/><path d="M11 4h4.500v7.500H11A3.700 3.700 0 0 1 11 4z" fill="#f24e1e"/><path d="M15.500 4h3.300a3.700 3.700 0 0 1 0 7.500h-3.300z" fill="#ff7262"/><path d="M11 11.500h4.500V19H11a3.700 3.700 0 0 1 0-7.500z" fill="#a259ff"/><circle cx="19" cy="15.200" r="3.700" fill="#1abcfe"/><path d="M11 19h4v3.300A3.800 3.800 0 1 1 11 19z" fill="#0acf83"/></svg></button>
    <button class="relative grid h-[50px] w-[55px] place-items-center" aria-label="Spotify"><svg class="size-[29px]" viewBox="0 0 29 29"><circle cx="14.500" cy="14.500" r="14.500" fill="#1ed760"/><path d="M5 9.500q10-3 20 2M6 14.500q8.500-2.500 16.500 2M7 19q7-2 13.500 2" fill="none" stroke="#14241a" stroke-width="2.500" stroke-linecap="round"/></svg><span class="absolute bottom-0 h-1 w-2 rounded-full bg-[#a08a90]"></span></button>
    <button class="relative grid h-[50px] w-[55px] place-items-center" aria-label="WhatsApp"><svg class="size-[30px]" viewBox="0 0 30 30"><path d="M0 30l2-8A15 15 0 1 1 8 28z" fill="#fff"/><path d="M3 27l1.500-5.500A12 12 0 1 1 9 25.500z" fill="#2cb742"/><path d="M9 8l3-.5 2 4-1.500 2q1.500 3 4.500 4l2-2 4 2-.5 3q-3 3-8-.5-6.500-5-5.500-12z" fill="#fff"/></svg><span class="absolute top-1 right-1 grid h-5 w-[26px] place-items-center rounded-full bg-[#dd9ee2] text-sm text-[#201020]">20</span><span class="absolute bottom-0 h-1 w-2 rounded-full bg-[#a08a90]"></span></button>
  </div>
  <div class="mr-[25px] ml-auto flex shrink-0 items-center">
    <button aria-label="Hidden icons"><svg class="h-[9px] w-[14px]" viewBox="0 0 14 9" fill="none" stroke="#fff" stroke-width="2"><path d="M1 8l6-6 6 6"/></svg></button>
    <svg class="ml-[23px] h-[18px] w-5" viewBox="0 0 20 18"><path d="M3 13a4 4 0 0 1-.5-8 6 6 0 0 1 11-1 5 5 0 0 1 2 9z" fill="#b9b2b0"/><path d="M3 13a3 3 0 0 1 0-5 9 9 0 0 1 9 5z" fill="#fff"/><circle cx="14.500" cy="12.500" r="5.500" fill="#fff"/><path d="M11 12a3.600 3.600 0 0 1 6.500-1.500M18 13a3.600 3.600 0 0 1-6.500 1.500" fill="none" stroke="#1b74c9" stroke-width="1.500"/></svg>
    <div class="ml-[22px] w-[32px] pb-[2px] text-center text-[15px] leading-5">ENG<br>IN</div>
    <svg class="ml-[21px] h-[15px] w-5" viewBox="0 0 20 15" fill="none" stroke="#fff" stroke-width="1.400"><path d="M.8 5a13 13 0 0 1 18.400 0M3.500 8a9.200 9.200 0 0 1 13 0M6.200 10.800a5.400 5.400 0 0 1 7.600 0"/><circle cx="10" cy="13" r="1.800" fill="#fff" stroke="none"/></svg>
    <svg class="ml-[10px] h-[14px] w-5" viewBox="0 0 20 14" fill="none" stroke="#fff" stroke-width="1.400"><path d="M.7 4.500h3L8.500.8v12.400L3.700 9.500h-3zM12 4l7 6.500M19 4l-7 6.500"/></svg>
    <svg class="ml-[10px] h-[14px] w-5" viewBox="0 0 20 14" fill="none" stroke="#fff" stroke-width="1.400"><rect x=".7" y="1" width="16" height="12" rx="2.500"/><path d="M3.500 4v6" stroke-width="2.500"/><path d="M18.500 5v4" stroke-width="2"/></svg>
    <div class="ml-5 pb-[3px] text-right text-[15px] leading-5 whitespace-nowrap">16:25<br>04-05-2023</div>
    <span class="ml-[9px] grid size-5 place-items-center rounded-full bg-[#dd9ee2] text-xs text-[#201020]">5</span>
  </div>
  </div>
</footer>
</body>
</html>
